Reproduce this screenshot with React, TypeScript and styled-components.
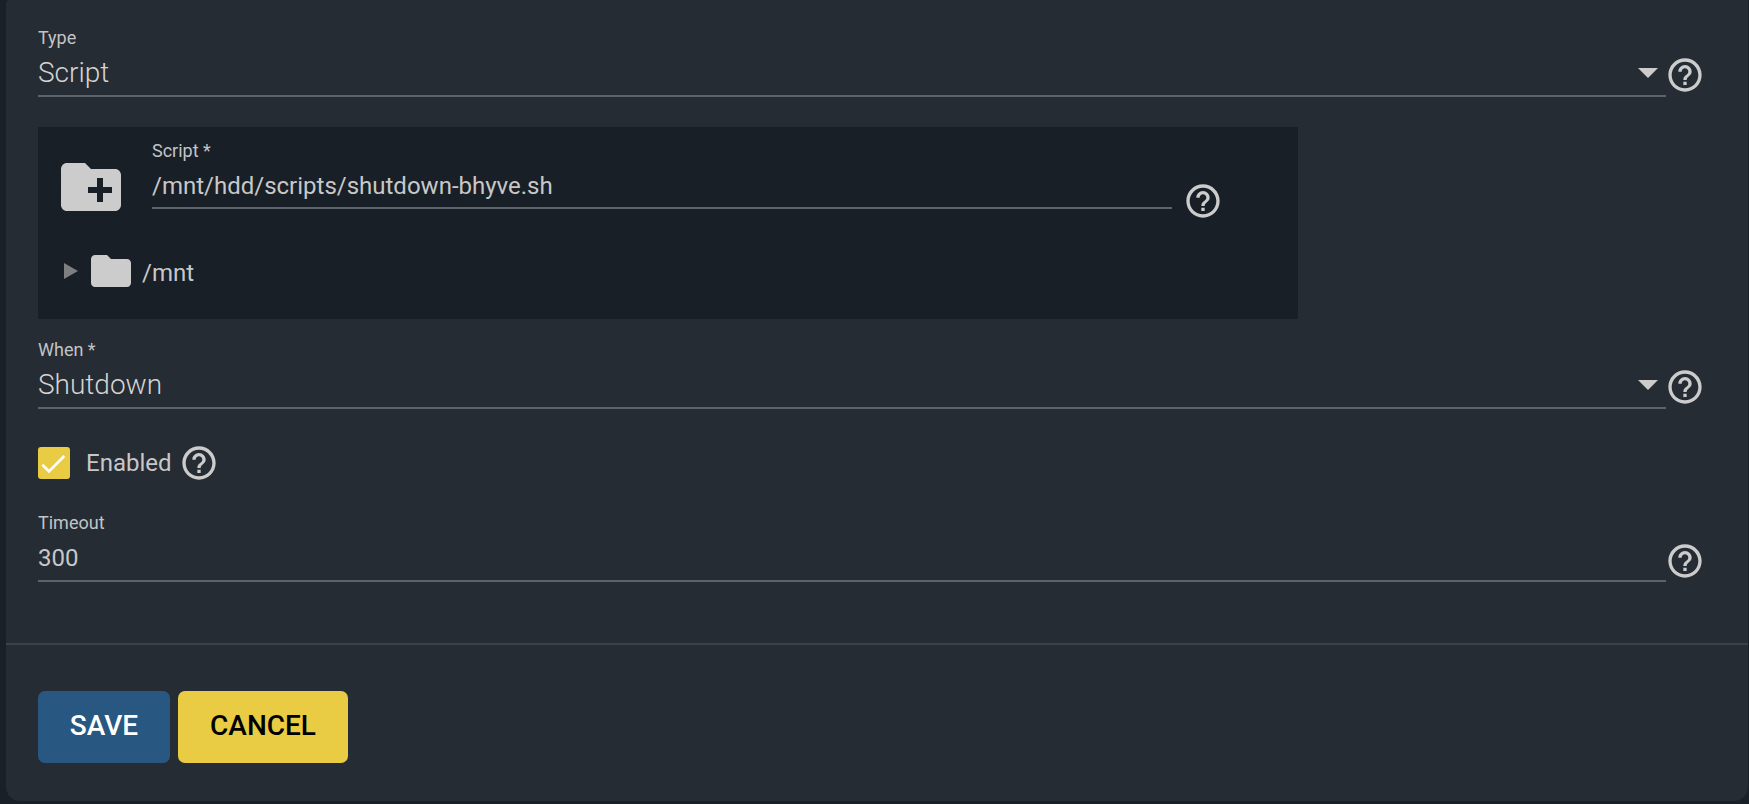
import React from 'react';
import styled, { createGlobalStyle } from 'styled-components';

const GlobalStyle = createGlobalStyle`
  html, body {
    margin: 0;
    height: 100%;
    background: #1a2027;
    overflow: hidden;
  }
  body {
    font-family: Roboto, "Liberation Sans", sans-serif;
  }
`;

const Card = styled.form`
  box-sizing: border-box;
  height: 801px;
  margin: 0 1px 0 6px;
  background: #252c33;
  border-radius: 4px 0 14px 14px;
  display: flex;
  flex-direction: column;
`;

const FormBody = styled.div`
  box-sizing: border-box;
  height: 645px;
  padding: 26px 0 0 32px;
  border-bottom: 2px solid #3a4148;
`;

const FieldRow = styled.div<{ $mt?: number }>`
  display: flex;
  align-items: flex-end;
  margin-top: ${p => p.$mt ?? 0}px;
`;

const Field = styled.div<{ $width?: number }>`
  flex: ${p => (p.$width ? `0 0 ${p.$width}px` : '0 0 1628px')};
`;

const Label = styled.div`
  height: 24px;
  line-height: 24px;
  font-size: 18px;
  font-weight: 400;
  color: #c2c4c6;
`;

const Value = styled.div<{ $small?: boolean }>`
  display: flex;
  align-items: center;
  justify-content: space-between;
  height: 45px;
  font-size: ${p => (p.$small ? 24 : 28)}px;
  font-weight: ${p => (p.$small ? 400 : 300)};
  color: ${p => (p.$small ? '#c8c8c8' : '#d4d4d4')};
  border-bottom: 2px solid #5d6369;
`;

const PathValue = styled(Value)`
  height: 43px;
  padding-top: 1px;
`;

const Arrow = styled.span`
  width: 0;
  height: 0;
  margin-right: 8px;
  border-left: 10px solid transparent;
  border-right: 10px solid transparent;
  border-top: 10px solid #cccccc;
`;

const HelpIcon = styled.svg<{ $mb?: number }>`
  flex: none;
  width: 40px;
  height: 40px;
  margin-left: -1px;
  margin-bottom: ${p => p.$mb ?? 0}px;
  fill: #cccccc;
`;

const Help = ({ mb }: { mb?: number }) => (
  <HelpIcon $mb={mb} viewBox="0 0 24 24">
    <path d="M11 18h2v-2h-2v2zm1-16C6.48 2 2 6.48 2 12s4.48 10 10 10 10-4.48 10-10S17.52 2 12 2zm0 18c-4.41 0-8-3.59-8-8s3.59-8 8-8 8 3.59 8 8-3.59 8-8 8zm0-14c-2.21 0-4 1.79-4 4h2c0-1.1.9-2 2-2s2 .9 2 2c0 2-3 1.75-3 5h2c0-2.25 3-2.5 3-5 0-2.21-1.79-4-4-4z" />
  </HelpIcon>
);

const Explorer = styled.div`
  box-sizing: border-box;
  width: 1260px;
  height: 192px;
  margin-top: 30px;
  padding: 24px 0 0 17px;
  background: #181f26;
`;

const ExplorerHead = styled.div`
  display: flex;
  align-items: flex-start;
`;

const BigFolder = styled.svg`
  flex: none;
  width: 72px;
  height: 72px;
  margin-right: 25px;
  fill: #cccccc;
`;

const ExplorerField = styled.div`
  display: flex;
  align-items: flex-end;
  margin-top: -12px;
`;

const HelpGap = styled.div`
  width: 12px;
`;

const TreeRow = styled.div`
  display: flex;
  align-items: center;
  margin-top: 24px;
`;

const Caret = styled.span`
  width: 0;
  height: 0;
  margin: 0 9px 0 9px;
  border-top: 8px solid transparent;
  border-bottom: 8px solid transparent;
  border-left: 14px solid #7d7f81;
`;

const TreeFolder = styled.svg`
  flex: none;
  width: 48px;
  height: 48px;
  margin-right: 7px;
  fill: #cccccc;
`;

const TreeLabel = styled.span`
  padding-top: 4px;
  font-size: 24px;
  font-weight: 400;
  color: #c8c8c8;
`;

const CheckRow = styled.label`
  display: flex;
  align-items: center;
  height: 40px;
  margin-top: 34px;
`;

const CheckBox = styled.span`
  display: flex;
  flex: none;
  width: 32px;
  height: 32px;
  margin-right: 16px;
  border-radius: 3px;
  background: #e9cc44;
`;

const CheckText = styled.span`
  font-size: 24px;
  font-weight: 400;
  color: #c8c8c8;
  margin-right: 8px;
`;

const Actions = styled.div`
  display: flex;
  gap: 8px;
  padding: 46px 0 0 32px;
`;

const ActionButton = styled.button<{ $primary?: boolean }>`
  height: 72px;
  width: ${p => (p.$primary ? 132 : 170)}px;
  padding: 0 0 4px;
  border: 0;
  border-radius: 7px;
  font-family: inherit;
  font-size: 28px;
  font-weight: 500;
  background: ${p => (p.$primary ? '#285782' : '#e9cc44')};
  color: ${p => (p.$primary ? '#ffffff' : '#000000')};
`;

export default function App() {
  return (
    <>
      <GlobalStyle />
      <Card>
        <FormBody>
          <FieldRow>
            <Field>
              <Label>Type</Label>
              <Value>
                Script
                <Arrow />
              </Value>
            </Field>
            <Help mb={2} />
          </FieldRow>

          <Explorer>
            <ExplorerHead>
              <BigFolder viewBox="0 0 24 24">
                <path d="M20 6h-8l-2-2H4c-1.11 0-1.99.89-1.99 2L2 18c0 1.11.89 2 2 2h16c1.11 0 2-.89 2-2V8c0-1.11-.89-2-2-2zm-1 8h-3v3h-2v-3h-3v-2h3V9h2v3h3v2z" />
              </BigFolder>
              <ExplorerField>
                <Field $width={1020}>
                  <Label>Script *</Label>
                  <PathValue $small>/mnt/hdd/scripts/shutdown-bhyve.sh</PathValue>
                </Field>
                <HelpGap />
                <Help mb={-12} />
              </ExplorerField>
            </ExplorerHead>
            <TreeRow>
              <Caret />
              <TreeFolder viewBox="0 0 24 24">
                <path d="M10 4H4c-1.1 0-1.99.9-1.99 2L2 18c0 1.1.9 2 2 2h16c1.1 0 2-.9 2-2V8c0-1.1-.9-2-2-2h-8l-2-2z" />
              </TreeFolder>
              <TreeLabel>/mnt</TreeLabel>
            </TreeRow>
          </Explorer>

          <FieldRow $mt={19}>
            <Field>
              <Label>When *</Label>
              <Value>
                Shutdown
                <Arrow />
              </Value>
            </Field>
            <Help mb={2} />
          </FieldRow>

          <CheckRow>
            <CheckBox>
              <svg width="32" height="32" viewBox="0 0 32 32">
                <path d="M4.3 17.7 11 24.3 26.3 9" fill="none" stroke="#ffffff" strokeWidth="2.6" />
              </svg>
            </CheckBox>
            <CheckText>Enabled</CheckText>
            <Help />
          </CheckRow>

          <FieldRow $mt={28}>
            <Field>
              <Label>Timeout</Label>
              <Value $small>300</Value>
            </Field>
            <Help mb={1} />
          </FieldRow>
        </FormBody>

        <Actions>
          <ActionButton type="button" $primary>SAVE</ActionButton>
          <ActionButton type="button">CANCEL</ActionButton>
        </Actions>
      </Card>
    </>
  );
}
